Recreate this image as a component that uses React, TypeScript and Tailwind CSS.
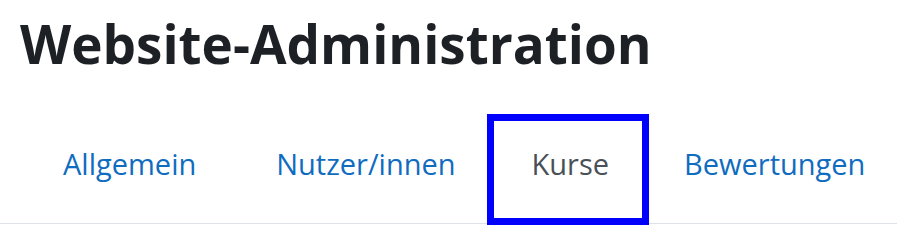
export default function App() {
  const tabs = [
    { name: 'Allgemein', active: false },
    { name: 'Nutzer/innen', active: false },
    { name: 'Kurse', active: true },
    { name: 'Bewertungen', active: false },
  ];

  return (
    <div className="w-[897px] h-[236px] bg-white overflow-hidden" style={{ fontFamily: '"Open Sans", "Noto Sans", sans-serif' }}>
      <h2 className="pl-[20px] pt-[12px] text-[53px] leading-[64px] font-bold text-[#1d2125]">
        Website-Administration
      </h2>
      <ul className="mt-[38px] flex items-start border-b border-[#dee2e6] pl-[23px]">
        {tabs.map((tab) => (
          <li key={tab.name}>
            <a
              href="#"
              className={`block whitespace-nowrap text-[29px] leading-[44px] ${
                tab.active
                  ? 'h-[111px] -mb-[2px] -ml-[9px] mr-[-5px] pl-[38px] pr-[33px] pt-[21px] text-[#495057] border-[7px] border-[#0000ff]'
                  : 'h-[109px] px-[40px] pt-[28px] text-[#0f6cbf]'
              }`}
            >
              {tab.name}
            </a>
          </li>
        ))}
      </ul>
    </div>
  );
}
